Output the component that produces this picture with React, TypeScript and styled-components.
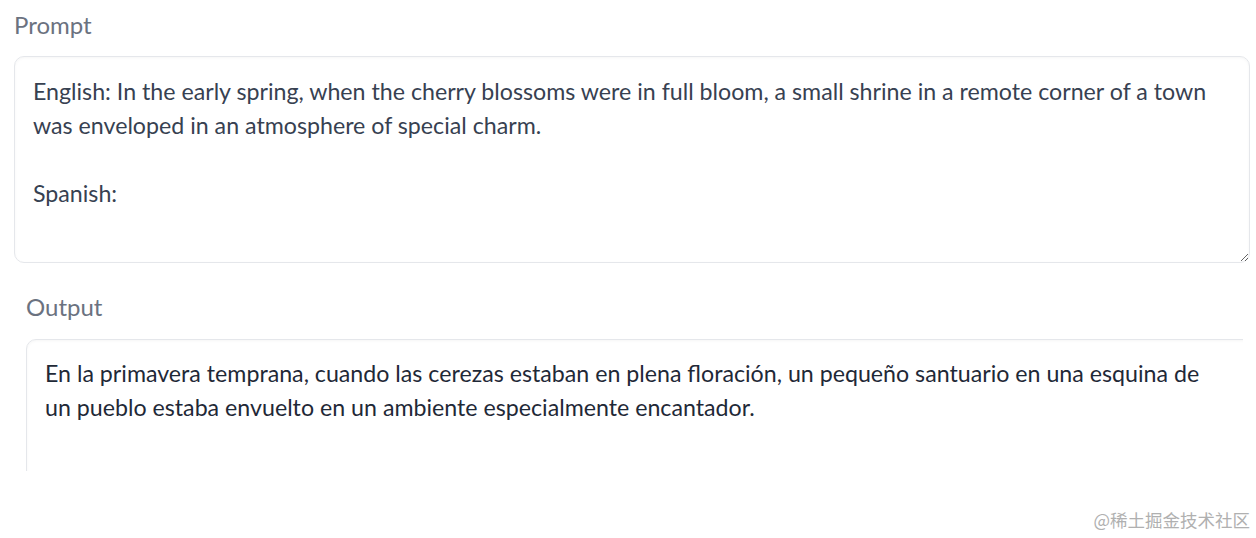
import React from 'react';
import styled, { createGlobalStyle } from 'styled-components';

const GlobalStyle = createGlobalStyle`
  html, body {
    margin: 0;
    padding: 0;
    background: #ffffff;
  }
  body {
    font-family: Lato, 'Noto Sans', 'Liberation Sans', sans-serif;
  }
`;

const promptText =
  'English: In the early spring, when the cherry blossoms were in full bloom, a small shrine in a remote corner of a town was enveloped in an atmosphere of special charm.\n\nSpanish:';

const outputText =
  'En la primavera temprana, cuando las cerezas estaban en plena floración, un pequeño santuario en una esquina de un pueblo estaba envuelto en un ambiente especialmente encantador.';

const App = () => {
  return (
    <S.Page>
      <GlobalStyle />
      <S.Block>
        <S.Label>Prompt</S.Label>
        <S.PromptBox defaultValue={promptText} spellCheck={false} />
      </S.Block>
      <S.OutputClip>
        <S.OutputBlock>
          <S.Label>Output</S.Label>
          <S.OutputBox>{outputText}</S.OutputBox>
        </S.OutputBlock>
      </S.OutputClip>
      <S.Watermark>@稀土掘金技术社区</S.Watermark>
    </S.Page>
  );
};

const S = {
  Page: styled.div`
    width: 1256px;
    height: 538px;
    position: relative;
    overflow: hidden;
    background: #fff;
  `,
  Block: styled.div`
    padding: 10px 6px 0 14px;
    display: flex;
    flex-direction: column;
    gap: 16px;
  `,
  Label: styled.div`
    font-size: 24px;
    line-height: 30px;
    color: #6b7280;
  `,
  PromptBox: styled.textarea`
    box-sizing: border-box;
    display: block;
    width: 100%;
    height: 207px;
    margin: 0;
    padding: 17px 18px;
    border: 1px solid #e5e7eb;
    border-radius: 10px;
    box-shadow: inset 0 1px 3px rgba(0, 0, 0, 0.04);
    font-family: inherit;
    font-size: 23.2px;
    line-height: 34px;
    color: #374151;
    background: #fff;
    resize: vertical;
    outline: none;
  `,
  OutputClip: styled.div`
    margin-top: 29px;
    height: 179px;
    width: 1243px;
    overflow: hidden;
  `,
  OutputBlock: styled.div`
    padding-left: 26px;
    display: flex;
    flex-direction: column;
    gap: 17px;
  `,
  OutputBox: styled.div`
    box-sizing: border-box;
    width: 1230px;
    height: 220px;
    padding: 16px 30px 17px 18px;
    border: 1px solid #e5e7eb;
    border-radius: 10px;
    box-shadow: inset 0 1px 3px rgba(0, 0, 0, 0.04);
    font-size: 23.2px;
    line-height: 34px;
    color: #1f2937;
  `,
  Watermark: styled.div`
    position: absolute;
    right: 6px;
    bottom: 6px;
    font-family: 'Noto Sans CJK SC', sans-serif;
    font-size: 17.5px;
    color: #b0b0b0;
  `,
};

export default App;
